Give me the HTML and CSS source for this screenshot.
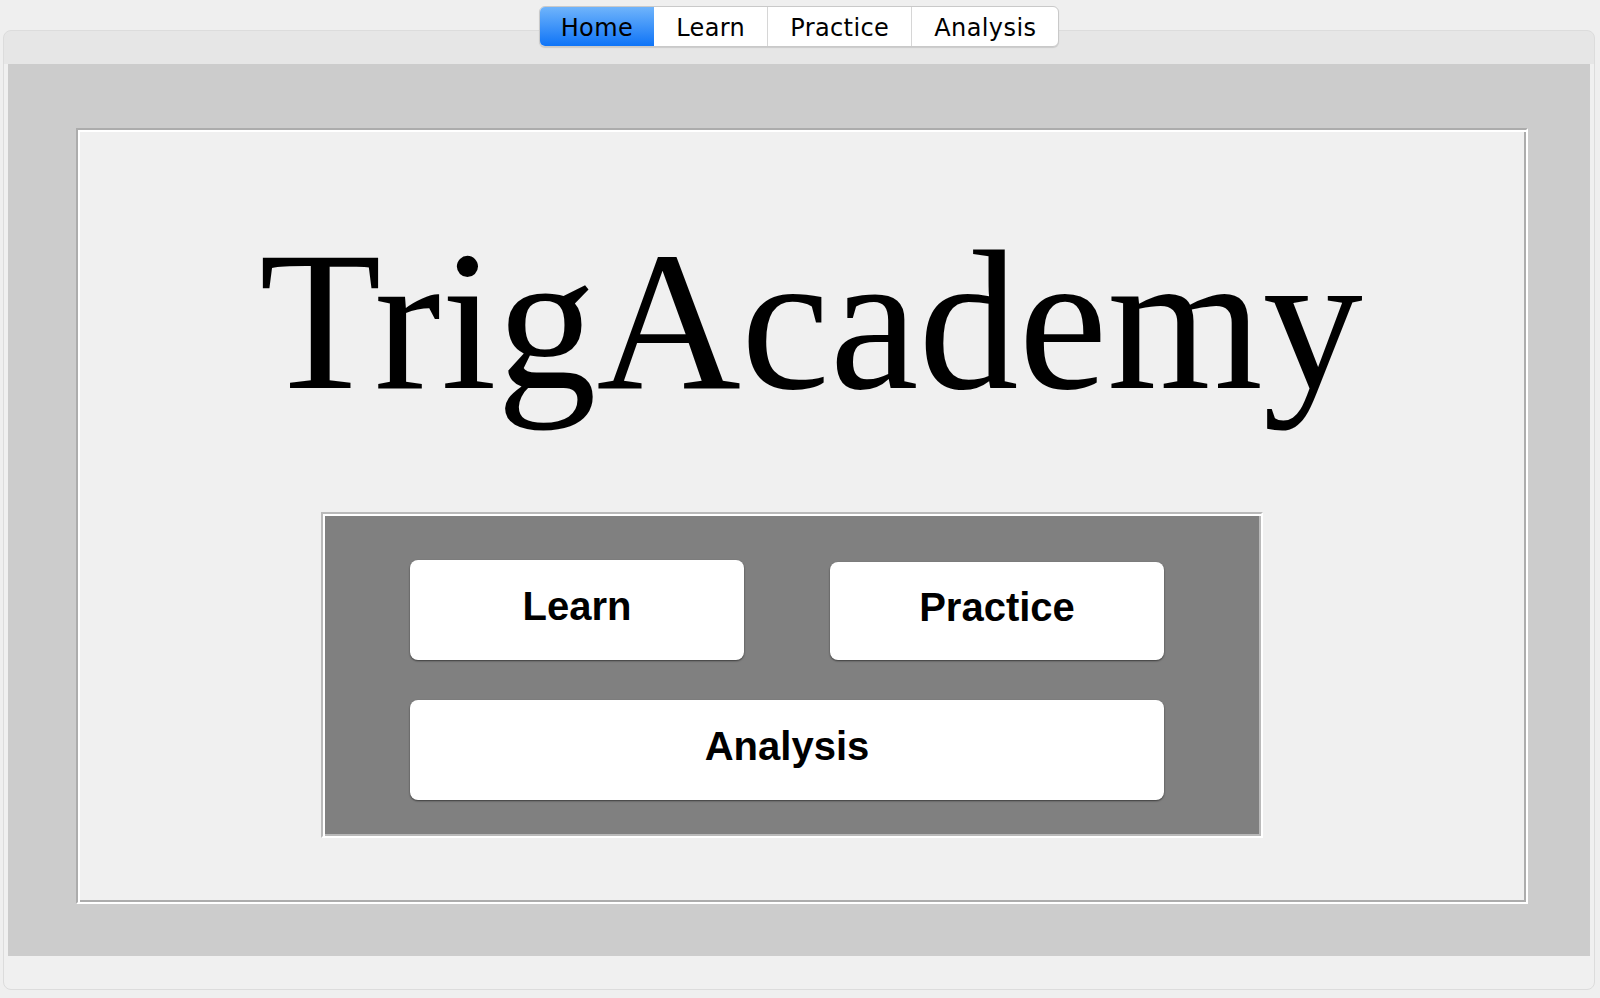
FILE: index.html
```html
<!DOCTYPE html>
<html lang="en">
<head>
<meta charset="utf-8">
<title>TrigAcademy</title>
<link rel="stylesheet" href="styles.css">
</head>
<body>
<div class="app">
  <nav class="tabs">
    <span class="tab active">Home</span>
    <span class="tab">Learn</span>
    <span class="tab">Practice</span>
    <span class="tab">Analysis</span>
  </nav>
  <div class="window">
    <div class="content">
      <div class="card">
        <h1 class="title">TrigAcademy</h1>
        <div class="menu">
          <button class="btn">Learn</button>
          <button class="btn btn-practice">Practice</button>
          <button class="btn btn-wide">Analysis</button>
        </div>
      </div>
    </div>
  </div>
</div>
</body>
</html>
```

FILE: styles.css
```css
* { box-sizing: border-box; }

html, body {
  margin: 0;
  padding: 0;
  background: #efefef;
}

.app {
  display: flex;
  flex-direction: column;
  padding-top: 6px;
  width: 1600px;
  height: 998px;
  overflow: hidden;
}

.tabs {
  align-self: center;
  position: relative;
  z-index: 1;
  display: flex;
  height: 41px;
  background: #ffffff;
  border: 1px solid #c9c9c9;
  border-radius: 6px;
  box-shadow: 0 1px 1px rgba(0, 0, 0, 0.12);
  overflow: hidden;
  margin-left: -2px;
}

.tab {
  display: flex;
  align-items: center;
  padding: 2px 22px 0;
  font-family: "DejaVu Sans", "Noto Sans", sans-serif;
  font-size: 24px;
  letter-spacing: 0.4px;
  color: #000;
  border-left: 1px solid #d6d6d6;
}

.tab:first-child { border-left: none; }

.tab.active {
  background: linear-gradient(#6fb4fb, #0f74f7);
  padding: 2px 21px 0;
}

.tab.active + .tab { border-left: none; }

.window {
  margin: -17px 5px 0 3px;
  height: 960px;
  border: 1px solid #dcdcdc;
  border-radius: 8px;
  background: linear-gradient(#e6e6e6 0, #e6e6e6 33px, #f0f0f0 33px);
  padding: 33px 4px 0 4px;
}

.content {
  height: 892px;
  background: #cccccc;
  padding: 64px 0 0 68px;
}

.card {
  width: 1452px;
  height: 776px;
  background: #f0f0f0;
  border-style: solid;
  border-width: 2px;
  border-color: #acacac #ffffff #ffffff #acacac;
  box-shadow: inset 2px 2px 0 0 #ffffff, inset -2px -2px 0 0 #acacac;
  display: flex;
  flex-direction: column;
  align-items: flex-start;
}

.title {
  align-self: stretch;
  margin: 91px 0 0 0;
  padding-left: 18px;
  font-family: "Liberation Serif", "Times New Roman", serif;
  font-weight: normal;
  font-size: 200px;
  line-height: 200px;
  text-align: center;
  color: #000;
}

.menu {
  margin: 91px 0 0 243px;
  width: 942px;
  height: 326px;
  background: #808080;
  border-style: solid;
  border-width: 2px;
  border-color: #b9b9b9 #ffffff #ffffff #b9b9b9;
  box-shadow: inset 2px 2px 0 0 #ffffff, inset -2px -2px 0 0 #b9b9b9;
  padding: 46px 0 0 87px;
  display: grid;
  grid-template-columns: 334px 334px;
  grid-auto-rows: 100px;
  column-gap: 86px;
  row-gap: 40px;
  align-content: start;
}

.btn {
  margin: 0;
  border: none;
  border-radius: 8px;
  background: #ffffff;
  box-shadow: 0 1px 2px rgba(0, 0, 0, 0.55);
  font-family: "Liberation Sans", Arial, sans-serif;
  font-weight: bold;
  font-size: 40px;
  color: #000;
  padding: 0 0 8px 0;
  display: flex;
  align-items: center;
  justify-content: center;
}

.btn-practice {
  margin-top: 2px;
}

.btn-wide {
  grid-column: 1 / span 2;
}
```
